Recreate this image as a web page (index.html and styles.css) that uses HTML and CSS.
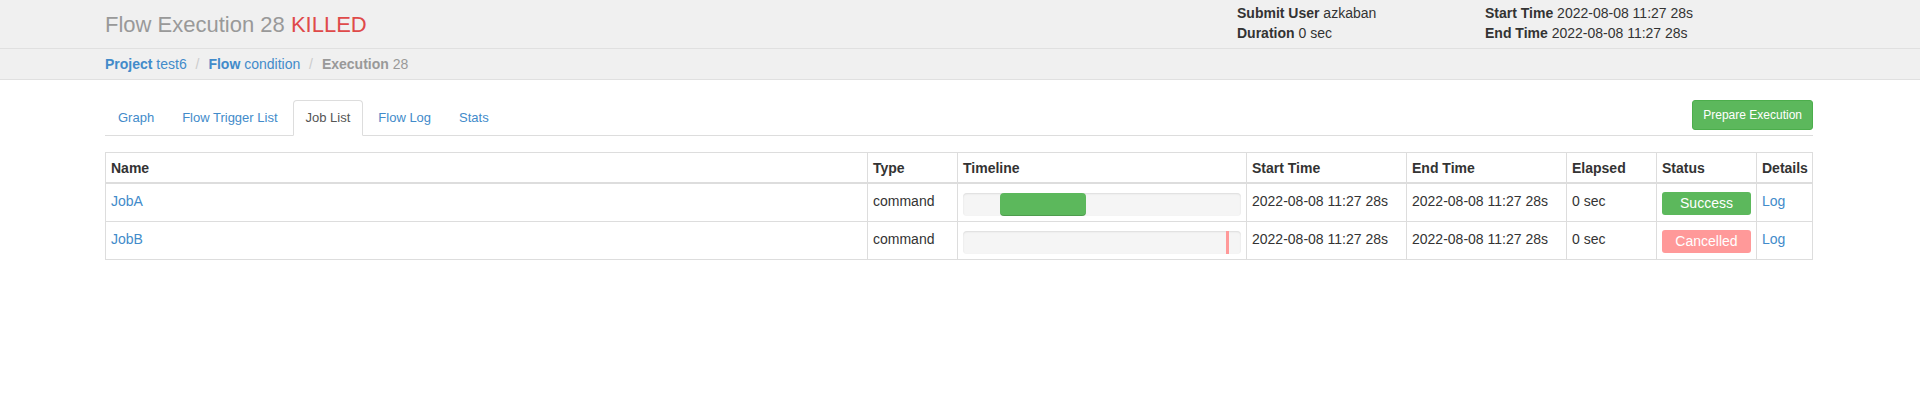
FILE: index.html
```html
<!DOCTYPE html>
<html lang="en">
<head>
    <meta charset="UTF-8">
    <title>Flow Execution 28</title>
    <link rel="stylesheet" href="styles.css">
</head>
<body>

<div class="page-header">
    <div class="container header-row">
        <h1>Flow Execution 28 <span class="killed">KILLED</span></h1>
        <div class="header-info">
            <div><strong>Submit User</strong> azkaban</div>
            <div><strong>Start Time</strong> 2022-08-08 11:27 28s</div>
            <div><strong>Duration</strong> 0 sec</div>
            <div><strong>End Time</strong> 2022-08-08 11:27 28s</div>
        </div>
    </div>
</div>

<div class="page-breadcrumb">
    <div class="container">
        <ul class="breadcrumb">
            <li><a href="#"><strong>Project</strong> test6</a></li>
            <li><a href="#"><strong>Flow</strong> condition</a></li>
            <li class="active"><strong>Execution</strong> 28</li>
        </ul>
    </div>
</div>

<div class="container">
    <div class="nav-row">
        <ul class="nav-tabs">
            <li><a href="#">Graph</a></li>
            <li><a href="#">Flow Trigger List</a></li>
            <li class="active"><a href="#">Job List</a></li>
            <li><a href="#">Flow Log</a></li>
            <li><a href="#">Stats</a></li>
        </ul>
        <button class="btn-success">Prepare Execution</button>
    </div>

    <table class="job-table">
        <colgroup>
            <col>
            <col class="col-type">
            <col class="col-timeline">
            <col class="col-date">
            <col class="col-date">
            <col class="col-elapsed">
            <col class="col-status">
            <col class="col-details">
        </colgroup>
        <tr>
            <th>Name</th>
            <th>Type</th>
            <th>Timeline</th>
            <th>Start Time</th>
            <th>End Time</th>
            <th>Elapsed</th>
            <th>Status</th>
            <th>Details</th>
        </tr>
        <tr>
            <td><a href="#">JobA</a></td>
            <td>command</td>
            <td><div class="flow-progress"><div class="progress-fill success" style="left: 37px; width: 86px;"></div></div></td>
            <td>2022-08-08 11:27 28s</td>
            <td>2022-08-08 11:27 28s</td>
            <td>0 sec</td>
            <td><div class="status success">Success</div></td>
            <td><a href="#">Log</a></td>
        </tr>
        <tr>
            <td><a href="#">JobB</a></td>
            <td>command</td>
            <td><div class="flow-progress"><div class="progress-fill cancelled" style="left: 263px; width: 3px;"></div></div></td>
            <td>2022-08-08 11:27 28s</td>
            <td>2022-08-08 11:27 28s</td>
            <td>0 sec</td>
            <td><div class="status cancelled">Cancelled</div></td>
            <td><a href="#">Log</a></td>
        </tr>
    </table>
</div>

</body>
</html>
```

FILE: styles.css
```css
body {
    font-family: "Liberation Sans", Arial, Helvetica, sans-serif;
    font-size: 14px;
    line-height: 20px;
    color: #333;
    background: #fff;
    margin: 0;
}
a {
    color: #428bca;
    text-decoration: none;
}
.container {
    margin: 0 107px 0 105px;
}
.page-header {
    background: #f0f0f0;
    border-bottom: 1px solid #e0e0e0;
    height: 48px;
}
.header-row {
    display: flex;
    align-items: flex-start;
}
h1 {
    margin: 0;
    padding-top: 12px;
    font-size: 22px;
    line-height: 26px;
    font-weight: normal;
    color: #999;
}
.killed {
    color: #df4a4a;
}
.header-info {
    margin-left: auto;
    width: 576px;
    padding-top: 3px;
    display: grid;
    grid-template-columns: 248px 1fr;
}
.page-breadcrumb {
    background: #f0f0f0;
    border-bottom: 1px solid #e0e0e0;
    padding: 5px 0;
}
.breadcrumb {
    list-style: none;
    margin: 0;
    padding: 0;
}
.breadcrumb li {
    display: inline-block;
}
.breadcrumb li + li:before {
    content: "/\00a0";
    padding: 0 5px;
    color: #ccc;
}
.breadcrumb .active {
    color: #999;
}
.nav-row {
    display: flex;
    align-items: flex-start;
    margin-top: 20px;
    border-bottom: 1px solid #ddd;
}
.nav-tabs {
    list-style: none;
    margin: 0 0 -1px 0;
    padding: 0;
    display: flex;
    font-size: 13px;
}
.nav-tabs li {
    margin-right: 2px;
}
.nav-tabs a {
    display: block;
    padding: 7px 12px;
    border: 1px solid transparent;
    border-radius: 4px 4px 0 0;
}
.nav-tabs .active a {
    color: #555;
    background: #fff;
    border-color: #ddd #ddd transparent;
}
.btn-success {
    margin-left: auto;
    font-family: inherit;
    font-size: 12px;
    line-height: 18px;
    padding: 5px 10px;
    color: #fff;
    background-color: #5cb85c;
    border: 1px solid #4cae4c;
    border-radius: 3px;
    cursor: pointer;
}
.job-table {
    width: 100%;
    margin-top: 16px;
    border-collapse: collapse;
    table-layout: fixed;
    border: 1px solid #ddd;
}
.col-type {
    width: 90px;
}
.col-timeline {
    width: 289px;
}
.col-date {
    width: 160px;
}
.col-elapsed {
    width: 90px;
}
.col-status {
    width: 100px;
}
.col-details {
    width: 56px;
}
th, td {
    border: 1px solid #ddd;
    text-align: left;
    vertical-align: top;
    white-space: nowrap;
}
th {
    padding: 5px 5px 4px;
    border-bottom-width: 2px;
    font-weight: bold;
}
td {
    padding: 7px 5px 5px;
}
.flow-progress {
    position: relative;
    height: 23px;
    margin-top: 2px;
    background: #f5f5f5;
    border-radius: 4px;
    box-shadow: inset 0 1px 2px rgba(0,0,0,0.1);
    overflow: hidden;
}
.progress-fill {
    position: absolute;
    top: 0;
    bottom: 0;
}
.progress-fill.success {
    background: #5cb85c;
    border-radius: 4px;
    box-shadow: inset 0 -1px 0 rgba(0,0,0,0.15);
}
.progress-fill.cancelled {
    background: #ff9999;
}
.status {
    margin-top: 1px;
    height: 23px;
    line-height: 23px;
    text-align: center;
    color: #fff;
    border-radius: 3px;
}
.status.success {
    background: #5cb85c;
}
.status.cancelled {
    background: #ff9999;
}
```
